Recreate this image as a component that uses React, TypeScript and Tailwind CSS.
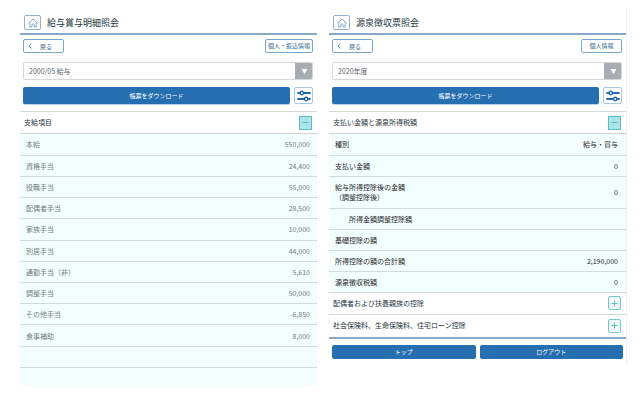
import { ReactNode, useState } from "react";

interface PayRow {
  label: string;
  value: string;
}

interface TaxRow extends PayRow {
  note?: string;
  indent?: boolean;
}

interface PanelProps {
  title: string;
  infoLabel: string;
  selectLabel: string;
  options: string[];
  children: ReactNode;
}

interface SectionHeaderProps {
  title: string;
  open: boolean;
  onToggle: () => void;
  className?: string;
}

const payRows: PayRow[] = [
  { label: "本給", value: "550,000" },
  { label: "資格手当", value: "24,400" },
  { label: "役職手当", value: "55,000" },
  { label: "配偶者手当", value: "28,500" },
  { label: "家族手当", value: "10,000" },
  { label: "別居手当", value: "44,000" },
  { label: "通勤手当（非）", value: "5,610" },
  { label: "調整手当", value: "50,000" },
  { label: "その他手当", value: "-6,850" },
  { label: "食事補助", value: "8,000" },
  { label: "", value: "" },
];

const taxRows: TaxRow[] = [
  { label: "種別", value: "給与・賞与" },
  { label: "支払い金額", value: "0" },
  { label: "給与所得控除後の金額", note: "（調整控除後）", value: "0" },
  { label: "所得金額調整控除額", value: "", indent: true },
  { label: "基礎控除の額", value: "" },
  { label: "所得控除の額の合計額", value: "2,190,000" },
  { label: "源泉徴収税額", value: "0" },
];

const HomeIcon = () => (
  <svg viewBox="0 0 12 12" className="size-3" fill="none" stroke="#6f9cc4">
    <path d="M1.4 6.4 6 2 10.6 6.4" strokeWidth="0.9" />
    <path
      d="M2.8 5.4V10H4.9V7.8A1.1 1.1 0 0 1 7.1 7.8V10H9.2V5.4"
      strokeWidth="0.8"
    />
  </svg>
);

const FilterIcon = () => (
  <svg viewBox="0 0 16 14" className="h-[14px] w-4" stroke="#2468b4">
    <path d="M2.2 4H13.8M2.2 10H13.8" strokeWidth="2.2" strokeLinecap="round" />
    <circle cx="5.8" cy="4" r="1.7" fill="#fff" strokeWidth="1.4" />
    <circle cx="10.2" cy="10" r="1.7" fill="#fff" strokeWidth="1.4" />
  </svg>
);

const Panel = ({
  title,
  infoLabel,
  selectLabel,
  options,
  children,
}: PanelProps) => (
  <section className="min-w-0 flex-1">
    <header className="flex h-[27px] items-center gap-[6px] border-b-2 border-[#86a9c9] pt-1 pl-1">
      <button
        type="button"
        aria-label="ホーム"
        className="flex h-[15px] w-[17px] items-center justify-center rounded-xs border border-[#8fb2d2]"
      >
        <HomeIcon />
      </button>
      <h1 className="text-[9px] leading-3 font-normal text-[#263640]">
        {title}
      </h1>
    </header>

    <div className="px-[3px] pt-1">
      <div className="flex items-center justify-between pr-px">
        <button
          type="button"
          className="flex h-[14px] w-[41px] items-center gap-2 rounded-xs border border-[#7ba6cc] pl-1 text-[6px] text-[#35698f]"
        >
          <svg
            viewBox="0 0 4 6"
            className="h-[6px] w-1"
            fill="none"
            stroke="#4c86b8"
            strokeWidth="0.9"
          >
            <path d="M3.4 0.5 0.9 3 3.4 5.5" />
          </svg>
          戻る
        </button>
        <button
          type="button"
          className="h-[14px] min-w-[41px] rounded-xs border border-[#7ba6cc] px-[2px] text-[6px] leading-3 text-[#2a5f8a]"
        >
          {infoLabel}
        </button>
      </div>

      <div className="mt-[9px] mr-px flex h-[18px] overflow-hidden rounded-xs border border-[#d5d7d9]">
        <select
          aria-label={selectLabel}
          className="min-w-0 flex-1 appearance-none bg-white pl-[5px] text-[7px] text-[#5d6468]"
        >
          {options.map((option) => (
            <option key={option}>{option}</option>
          ))}
        </select>
        <span
          aria-hidden="true"
          className="-my-px -mr-px flex w-[18px] items-center justify-center bg-[#a8adb5]"
        >
          <svg viewBox="0 0 6 6" className="size-[7px]" fill="#fff">
            <path d="M0.5 0.8H5.5L3 5.4Z" />
          </svg>
        </span>
      </div>

      <div className="mt-[7px] mr-px flex gap-1">
        <button
          type="button"
          className="h-[17px] flex-1 rounded-xs bg-[#256eb0] text-[6px] text-white shadow-[0_1px_0_#b9d3ea]"
        >
          帳票をダウンロード
        </button>
        <button
          type="button"
          aria-label="表示設定"
          className="flex h-[17px] w-[19px] items-center justify-center rounded-xs border border-[#a9c8e4]"
        >
          <FilterIcon />
        </button>
      </div>
    </div>

    {children}
  </section>
);

const SectionHeader = ({
  title,
  open,
  onToggle,
  className = "",
}: SectionHeaderProps) => (
  <div
    className={`flex h-[22px] items-center justify-between pr-[5px] pl-1 ${className}`}
  >
    <h2 className="text-[7px] font-normal text-[#26343c]">{title}</h2>
    <button
      type="button"
      aria-label={title}
      aria-expanded={open}
      onClick={onToggle}
      className={`flex h-[14px] w-[13px] items-center justify-center border ${
        open
          ? "border-[#5dbcc3] bg-[#abe5e9]"
          : "rounded-xs border-[#6fcacf] bg-[#f4feff]"
      }`}
    >
      <svg viewBox="0 0 7 7" className="size-[7px]" stroke="#5fbdc4">
        <path d={open ? "M0.5 3.5H6.5" : "M0.5 3.5H6.5M3.5 0.5V6.5"} />
      </svg>
    </button>
  </div>
);

const PayslipPanel = () => {
  const [open, setOpen] = useState(true);

  return (
    <Panel
      title="給与賞与明細照会"
      infoLabel="個人・振込情報"
      selectLabel="支給年月"
      options={["2000/05 給与"]}
    >
      <SectionHeader
        title="支給項目"
        open={open}
        onToggle={() => setOpen(!open)}
        className="mt-[7px] border-t border-[#d6d8da]"
      />
      {open && (
        <div className="border-t border-[#d0d6d8] bg-[#f3fffe] pb-[17px]">
          <table className="h-[234px] w-full text-[7px] leading-[10px] text-[#727c7e]">
            <tbody>
              {payRows.map((row) => (
                <tr key={row.label} className="h-[21px] border-b border-[#cfdadb]">
                  <th scope="row" className="pl-[6px] text-left font-normal">
                    {row.label}
                  </th>
                  <td className="pr-[7px] text-right">{row.value}</td>
                </tr>
              ))}
            </tbody>
          </table>
        </div>
      )}
    </Panel>
  );
};

const TaxPanel = () => {
  const [open, setOpen] = useState(true);
  const [familyOpen, setFamilyOpen] = useState(false);
  const [insuranceOpen, setInsuranceOpen] = useState(false);

  return (
    <Panel
      title="源泉徴収票照会"
      infoLabel="個人情報"
      selectLabel="年度"
      options={["2020年度"]}
    >
      <SectionHeader
        title="支払い金額と源泉所得税額"
        open={open}
        onToggle={() => setOpen(!open)}
        className="mt-[7px] border-t border-[#d6d8da]"
      />
      {open && (
        <div className="border-t border-[#d0d6d8] bg-[#f3fffe]">
          <table className="w-full text-[7px] leading-[10px] text-[#1c2528]">
            <tbody>
              {taxRows.map((row) => (
                <tr
                  key={row.label}
                  className={`border-b border-[#d2dcde] ${
                    row.note ? "h-8" : "h-[21px]"
                  }`}
                >
                  <th
                    scope="row"
                    className={`text-left font-normal ${
                      row.indent ? "pl-5" : "pl-[6px]"
                    }`}
                  >
                    {row.label}
                    {row.note && <span className="block">{row.note}</span>}
                  </th>
                  <td className="pr-2 text-right">{row.value}</td>
                </tr>
              ))}
            </tbody>
          </table>
        </div>
      )}
      <SectionHeader
        title="配偶者および扶養親族の控除"
        open={familyOpen}
        onToggle={() => setFamilyOpen(!familyOpen)}
        className="border-b border-[#d6d8da]"
      />
      <SectionHeader
        title="社会保険料、生命保険料、住宅ローン控除"
        open={insuranceOpen}
        onToggle={() => setInsuranceOpen(!insuranceOpen)}
      />
      <nav className="flex gap-1 border-t-2 border-[#86a9c9] px-[3px] pt-[6px] pb-[5px]">
        <button
          type="button"
          className="h-[14px] flex-1 rounded-xs bg-[#256eb0] text-[6px] leading-3 text-white"
        >
          トップ
        </button>
        <button
          type="button"
          className="h-[14px] flex-1 rounded-xs bg-[#256eb0] text-[6px] leading-3 text-white"
        >
          ログアウト
        </button>
      </nav>
    </Panel>
  );
};

export default function App() {
  return (
    <main className="flex min-h-screen items-start gap-3 bg-white pt-2 pr-[13px] pl-5 font-['Noto_Sans_CJK_JP',sans-serif] antialiased">
      <PayslipPanel />
      <div className="flex min-w-0 flex-1 border-r border-[#eef0f1]">
        <TaxPanel />
      </div>
    </main>
  );
}
